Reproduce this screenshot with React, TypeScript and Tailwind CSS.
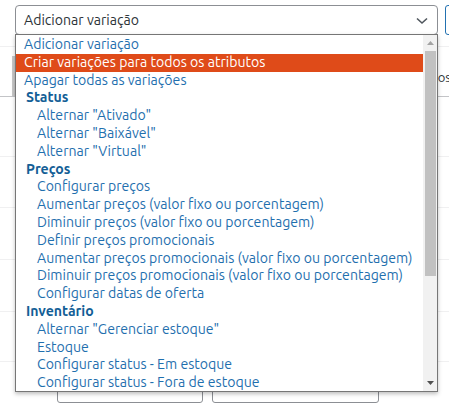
import React from "react";

type Opt = { label: string; kind: "top" | "group" | "sub"; active?: boolean };

const options: Opt[] = [
  { label: "Adicionar variação", kind: "top" },
  { label: "Criar variações para todos os atributos", kind: "top", active: true },
  { label: "Apagar todas as variações", kind: "top" },
  { label: "Status", kind: "group" },
  { label: 'Alternar "Ativado"', kind: "sub" },
  { label: 'Alternar "Baixável"', kind: "sub" },
  { label: 'Alternar "Virtual"', kind: "sub" },
  { label: "Preços", kind: "group" },
  { label: "Configurar preços", kind: "sub" },
  { label: "Aumentar preços (valor fixo ou porcentagem)", kind: "sub" },
  { label: "Diminuir preços (valor fixo ou porcentagem)", kind: "sub" },
  { label: "Definir preços promocionais", kind: "sub" },
  { label: "Aumentar preços promocionais (valor fixo ou porcentagem)", kind: "sub" },
  { label: "Diminuir preços promocionais (valor fixo ou porcentagem)", kind: "sub" },
  { label: "Configurar datas de oferta", kind: "sub" },
  { label: "Inventário", kind: "group" },
  { label: 'Alternar "Gerenciar estoque"', kind: "sub" },
  { label: "Estoque", kind: "sub" },
  { label: "Configurar status - Em estoque", kind: "sub" },
  { label: "Configurar status - Fora de estoque", kind: "sub" },
];

function Row({ o }: { o: Opt }) {
  if (o.kind === "group") {
    return (
      <div className="h-[17.8px] shrink-0 leading-[17.8px] pl-[10px] font-bold text-[#135e96] whitespace-nowrap">
        {o.label}
      </div>
    );
  }
  if (o.active) {
    return (
      <div className="h-[17.8px] shrink-0 leading-[17.8px] pl-[8px] bg-[#df4b19] text-white whitespace-nowrap">
        {o.label}
      </div>
    );
  }
  return (
    <div
      className={
        o.kind === "sub"
          ? "h-[17.8px] shrink-0 leading-[17.8px] pl-[21px] text-[#1f6fae] whitespace-nowrap"
          : "h-[17.8px] shrink-0 leading-[17.8px] pl-[8px] text-[#1f6fae] whitespace-nowrap"
      }
    >
      {o.label}
    </div>
  );
}

export default function App() {
  return (
    <div className="relative w-[449px] h-[403px] overflow-hidden bg-white font-['Ubuntu','Open_Sans',sans-serif] text-[14.1px]">
      {/* header row */}
      <div className="flex items-start pl-[15px] pt-[5px] gap-[7px]">
        <div className="w-[423px] h-[30px] shrink-0 border border-[#8c8f94] rounded-[4px] flex items-center justify-between pl-[8px] pr-[8px] pt-[1px] text-[#2c3338]">
          <span>Adicionar variação</span>
          <svg width="12" height="8" viewBox="0 0 12 8" className="mr-[1px]">
            <path d="M1 1.5 L6 6 L11 1.5" fill="none" stroke="#50575e" strokeWidth="1.6" />
          </svg>
        </div>
        <div className="w-[40px] h-[30px] shrink-0 border border-[#2271b1] rounded-[3px]" />
      </div>

      {/* background table rows */}
      <div className="flex flex-col">
        <div className="h-[12px] border-b border-[#f0f0f1]" />
        <div className="h-[50px] border-b border-[#c3c4c7] flex items-start justify-between">
          <div className="w-[3px] h-[40px] ml-[12px] bg-[#c8c8c8] mt-[9px]" />
          <span className="text-[13px] text-[#2c3338] mr-[-2px] mt-[21px]">Atributos</span>
        </div>
        <div className="h-[60px] border-b border-[#f0f0f1]" />
        <div className="h-[51px] border-b border-[#f0f0f1]" />
        <div className="h-[52px] border-b border-[#f0f0f1]" />
        <div className="h-[52px] border-b border-[#f0f0f1]" />
        <div className="h-[50px] border-b border-[#f0f0f1]" />
        <div className="flex gap-[9px] pl-[57px] pt-[11px]">
          <div className="w-[146px] h-[30px] border border-[#8c8f94] rounded-[3px]" />
          <div className="w-[167px] h-[30px] border border-[#8c8f94] rounded-[3px]" />
        </div>
      </div>

      {/* open dropdown */}
      <div className="absolute left-[15px] top-[34px] w-[423px] h-[358px] border border-[#767676] bg-white flex shadow-[0_2px_4px_rgba(0,0,0,0.25)]">
        <div className="flex-1 flex flex-col overflow-hidden pt-[1px]">
          {options.map((o, i) => (
            <Row key={i} o={o} />
          ))}
        </div>
        <div className="w-[14px] bg-[#f1f1f1] flex flex-col items-center">
          <div className="h-[16px] flex items-center justify-center">
            <svg width="7" height="4" viewBox="0 0 7 4">
              <path d="M0 4 L3.5 0 L7 4 Z" fill="#a3a3a3" />
            </svg>
          </div>
          <div className="w-[11px] h-[225px] bg-[#c1c1c1]" />
          <div className="flex-1" />
          <div className="h-[16px] flex items-center justify-center">
            <svg width="7" height="4" viewBox="0 0 7 4">
              <path d="M0 0 L7 0 L3.5 4 Z" fill="#505050" />
            </svg>
          </div>
        </div>
      </div>
    </div>
  );
}
